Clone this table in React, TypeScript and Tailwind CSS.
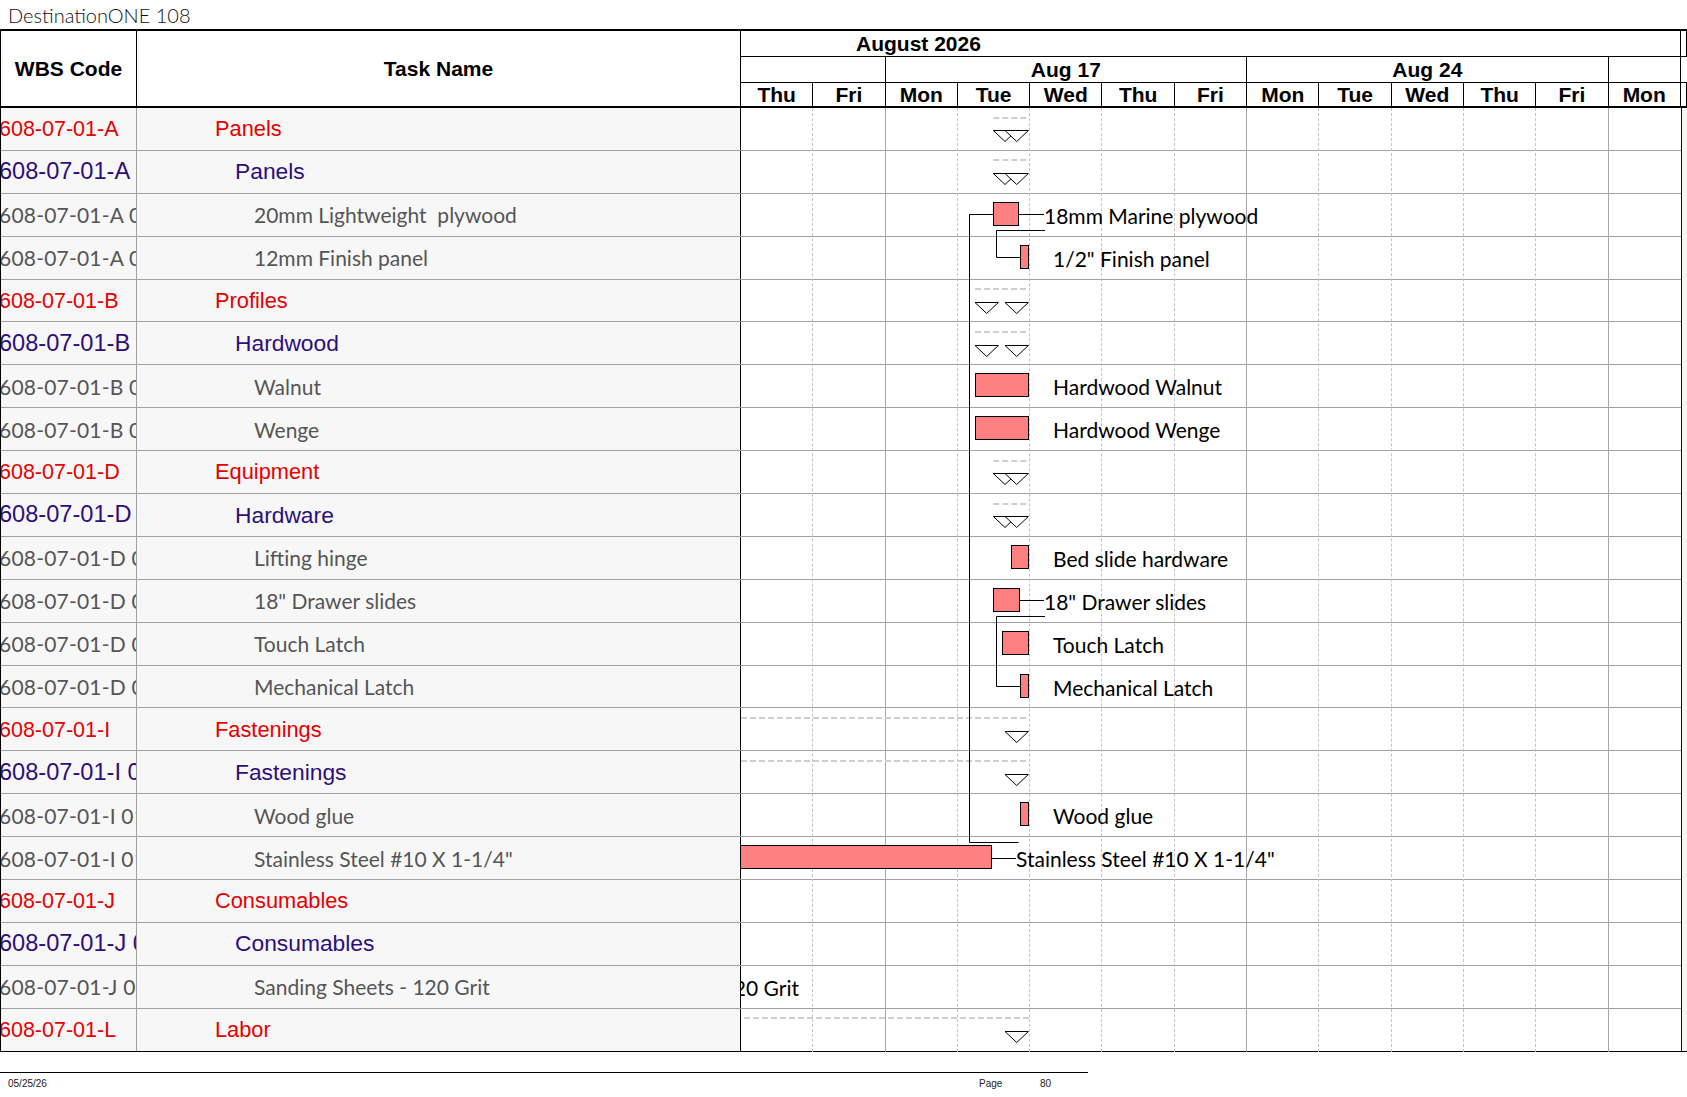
import React from 'react';

type Row = { wbs: string; name: string; level: 1 | 2 | 3 };

const rows: Row[] = [
  { wbs: '608-07-01-A', name: 'Panels', level: 1 },
  { wbs: '608-07-01-A', name: 'Panels', level: 2 },
  { wbs: '608-07-01-A 0101', name: '20mm Lightweight  plywood', level: 3 },
  { wbs: '608-07-01-A 0102', name: '12mm Finish panel', level: 3 },
  { wbs: '608-07-01-B', name: 'Profiles', level: 1 },
  { wbs: '608-07-01-B', name: 'Hardwood', level: 2 },
  { wbs: '608-07-01-B 0101', name: 'Walnut', level: 3 },
  { wbs: '608-07-01-B 0102', name: 'Wenge', level: 3 },
  { wbs: '608-07-01-D', name: 'Equipment', level: 1 },
  { wbs: '608-07-01-D', name: 'Hardware', level: 2 },
  { wbs: '608-07-01-D 0101', name: 'Lifting hinge', level: 3 },
  { wbs: '608-07-01-D 0102', name: '18" Drawer slides', level: 3 },
  { wbs: '608-07-01-D 0103', name: 'Touch Latch', level: 3 },
  { wbs: '608-07-01-D 0104', name: 'Mechanical Latch', level: 3 },
  { wbs: '608-07-01-I', name: 'Fastenings', level: 1 },
  { wbs: '608-07-01-I 01', name: 'Fastenings', level: 2 },
  { wbs: '608-07-01-I 0101', name: 'Wood glue', level: 3 },
  { wbs: '608-07-01-I 0102', name: 'Stainless Steel #10 X 1-1/4"', level: 3 },
  { wbs: '608-07-01-J', name: 'Consumables', level: 1 },
  { wbs: '608-07-01-J 01', name: 'Consumables', level: 2 },
  { wbs: '608-07-01-J 0101', name: 'Sanding Sheets - 120 Grit', level: 3 },
  { wbs: '608-07-01-L', name: 'Labor', level: 1 },
];

const ROW_H = 42.9;
const BODY_H = ROW_H * rows.length;
const top = (i: number) => i * ROW_H;
const ctr = (i: number) => Math.floor(top(i) + 21) + 0.5;

const days = ['Thu', 'Fri', 'Mon', 'Tue', 'Wed', 'Thu', 'Fri', 'Mon', 'Tue', 'Wed', 'Thu', 'Fri', 'Mon'];

const summaries = [
  { row: 0, x1: 252.3, tris: [252.3, 264] },
  { row: 1, x1: 252.3, tris: [252.3, 264] },
  { row: 4, x1: 234, tris: [234, 264] },
  { row: 5, x1: 234, tris: [234, 264] },
  { row: 8, x1: 252.3, tris: [252.3, 264] },
  { row: 9, x1: 252.3, tris: [252.3, 264] },
  { row: 14, x1: 0, tris: [264] },
  { row: 15, x1: 0, tris: [264] },
  { row: 21, x1: 3, tris: [264] },
];

const bars = [
  { row: 2, x1: 252, x2: 278 },
  { row: 3, x1: 279, x2: 288 },
  { row: 6, x1: 234, x2: 288 },
  { row: 7, x1: 234, x2: 288 },
  { row: 10, x1: 270, x2: 288 },
  { row: 11, x1: 252, x2: 279 },
  { row: 12, x1: 261, x2: 288 },
  { row: 13, x1: 279, x2: 288 },
  { row: 16, x1: 279, x2: 288 },
  { row: 17, x1: -5, x2: 251 },
];

const labels = [
  { row: 2, x: 303, t: '18mm Marine plywood' },
  { row: 3, x: 312, t: '1/2" Finish panel' },
  { row: 6, x: 312, t: 'Hardwood Walnut' },
  { row: 7, x: 312, t: 'Hardwood Wenge' },
  { row: 10, x: 312, t: 'Bed slide hardware' },
  { row: 11, x: 303, t: '18" Drawer slides' },
  { row: 12, x: 312, t: 'Touch Latch' },
  { row: 13, x: 312, t: 'Mechanical Latch' },
  { row: 16, x: 312, t: 'Wood glue' },
  { row: 17, x: 275, t: 'Stainless Steel #10 X 1-1/4"' },
];

function Header() {
  return (
    <div className="flex h-[77px] border-b-2 border-black bg-white font-['Liberation_Sans',Arial,sans-serif] font-bold text-[21px] text-black">
      <div className="w-[136px] border-r border-black flex items-center justify-center">WBS Code</div>
      <div className="w-[604px] border-r border-black flex items-center justify-center">Task Name</div>
      <div className="w-[946px] flex flex-col">
        <div className="flex h-[26px] border-b border-black">
          <div className="w-[940px] border-r border-black flex items-center pl-[115px] leading-none">August 2026</div>
          <div className="w-[6px] border-r border-black" />
        </div>
        <div className="flex h-[26px] border-b border-black leading-none">
          <div className="w-[144.6px] border-r border-black" />
          <div className="w-[361.5px] border-r border-black flex items-center justify-center">Aug 17</div>
          <div className="w-[361.5px] border-r border-black flex items-center justify-center">Aug 24</div>
          <div className="w-[72.4px] border-r border-black" />
          <div className="w-[6px]" />
        </div>
        <div className="flex h-[23px] leading-none">
          {days.map((d, i) => (
            <div key={i} className="w-[72.3px] border-r border-black flex items-center justify-center">
              {d}
            </div>
          ))}
          <div className="w-[6px] border-r border-black" />
        </div>
      </div>
    </div>
  );
}

function LeftRow({ r, last }: { r: Row; last: boolean }) {
  const border = last ? 'border-black' : 'border-[#a0a0a0]';
  let wbsCls = '';
  let nameCls = '';
  if (r.level === 1) {
    wbsCls = "font-['Liberation_Sans',Arial,sans-serif] text-[21.5px] text-[#e60000] mt-[2px]";
    nameCls = "font-['Liberation_Sans',Arial,sans-serif] text-[21.8px] text-[#e60000] pl-[78px]";
  } else if (r.level === 2) {
    wbsCls = "font-['Liberation_Sans',Arial,sans-serif] text-[23.6px] text-[#2e0f7a]";
    nameCls = "font-['Liberation_Sans',Arial,sans-serif] text-[22.8px] text-[#2e0f7a] pl-[98px]";
  } else {
    wbsCls = "font-['Lato',sans-serif] text-[21px] text-[#555555] tracking-[0.2px]";
    nameCls = "font-['Lato',sans-serif] text-[21px] text-[#555555] pl-[117px]";
  }
  return (
    <div className={`flex h-[42.9px] border-b ${border} bg-[#f7f7f7]`}>
      <div className="w-[136px] border-r border-[#a0a0a0] overflow-hidden whitespace-nowrap flex items-center">
        <span className={`ml-[-2px] leading-none ${wbsCls}`}>{r.wbs}</span>
      </div>
      <div className="w-[604px] border-r border-black overflow-hidden whitespace-pre flex items-center">
        <span className={`leading-none ${nameCls}`}>{r.name}</span>
      </div>
    </div>
  );
}

function Chart() {
  return (
    <div className="flex w-[946px]">
      <div className="relative w-[940px] overflow-hidden bg-white">
        {rows.map((_, i) => (
          <div
            key={i}
            className={`h-[42.9px] border-b ${i === rows.length - 1 ? 'border-black' : 'border-[#a0a0a0]'}`}
          />
        ))}
        <div className="absolute inset-0 flex pointer-events-none">
          {days.map((d, i) => (
            <div
              key={i}
              className={`w-[72.3px] h-full ${
                i === 12
                  ? ''
                  : i === 1 || i === 6 || i === 11
                  ? 'border-r border-[#a8a8a8]'
                  : 'border-r border-dashed border-[#c4c4c4]'
              }`}
            />
          ))}
        </div>
        <svg className="absolute left-0 top-0" width={940} height={BODY_H} viewBox={`0 0 940 ${BODY_H}`}>
          {summaries.map((s, k) => {
            const t = top(s.row);
            const y = Math.floor(t + 9) + 1;
            return (
              <g key={k}>
                <line x1={s.x1} y1={y} x2={288} y2={y} stroke="#cfcfcf" strokeWidth={2} strokeDasharray="6 3" />
                {s.tris.map((x, j) => {
                  const ty = Math.floor(t + 22.5) + 0.5;
                  return (
                    <polygon
                      key={j}
                      points={`${x},${ty} ${x + 23.4},${ty} ${x + 11.7},${ty + 11}`}
                      fill="white"
                      stroke="black"
                      strokeWidth={1}
                    />
                  );
                })}
              </g>
            );
          })}
          <g fill="none" stroke="black" strokeWidth={1}>
            <path d={`M 278 ${ctr(2)} H 303`} />
            <path d={`M 304 ${ctr(2) + 16} H 255.5 V ${ctr(3)} H 279`} />
            <path d={`M 252 ${ctr(2)} H 228.5 V ${Math.floor(top(17) + 5) + 0.5} H 277.5`} />
            <path d={`M 279 ${ctr(11)} H 303`} />
            <path d={`M 304 ${ctr(11) + 16} H 255.5 V ${ctr(13)} H 279`} />
            <path d={`M 251 ${ctr(17)} H 275`} />
          </g>
          {bars.map((b, k) => {
            const y = Math.floor(top(b.row) + 8.5) + 0.5;
            return (
              <rect
                key={k}
                x={b.x1 + 0.5}
                y={y}
                width={b.x2 - b.x1 - 1}
                height={23}
                fill="#ff8080"
                stroke="black"
                strokeWidth={1}
              />
            );
          })}
        </svg>
        {labels.map((l, k) => (
          <div
            key={k}
            className="absolute flex items-center h-[42.9px] whitespace-nowrap font-['Lato',sans-serif] text-[21px] text-black leading-none"
            style={{ left: l.x, top: top(l.row) }}
          >
            {l.t}
          </div>
        ))}
        <div
          className="absolute flex items-center h-[42.9px] whitespace-nowrap font-['Lato',sans-serif] text-[21px] text-black leading-none"
          style={{ right: 940 - 58, top: top(20) }}
        >
          Sanding Sheets - 120 Grit
        </div>
      </div>
      <div className="w-[6px] border-l border-b border-l-[#000080] border-b-black bg-[#f6f6f2]" />
    </div>
  );
}

export default function App() {
  return (
    <div className="w-[1687px] h-[1097px] bg-white overflow-hidden relative">
      <div className="h-[29px] flex items-center pl-[8px] font-['Lato',sans-serif] font-light text-[20px] text-[#111] leading-none">
        DestinationONE 108
      </div>
      <div className="w-[1687px] border-t-2 border-l border-black">
        <Header />
        <div className="flex">
          <div className="flex flex-col w-[740px]">
            {rows.map((r, i) => (
              <LeftRow key={i} r={r} last={i === rows.length - 1} />
            ))}
          </div>
          <Chart />
        </div>
      </div>
      <div className="mt-[20px] w-[1088px] border-t border-black" />
      <div className="flex w-[1088px] pt-[6px] font-['Liberation_Sans',Arial,sans-serif] text-[10px] text-[#222] leading-none">
        <div className="w-[979px] pl-[8px]">05/25/26</div>
        <div className="w-[61px]">Page</div>
        <div>80</div>
      </div>
    </div>
  );
}
